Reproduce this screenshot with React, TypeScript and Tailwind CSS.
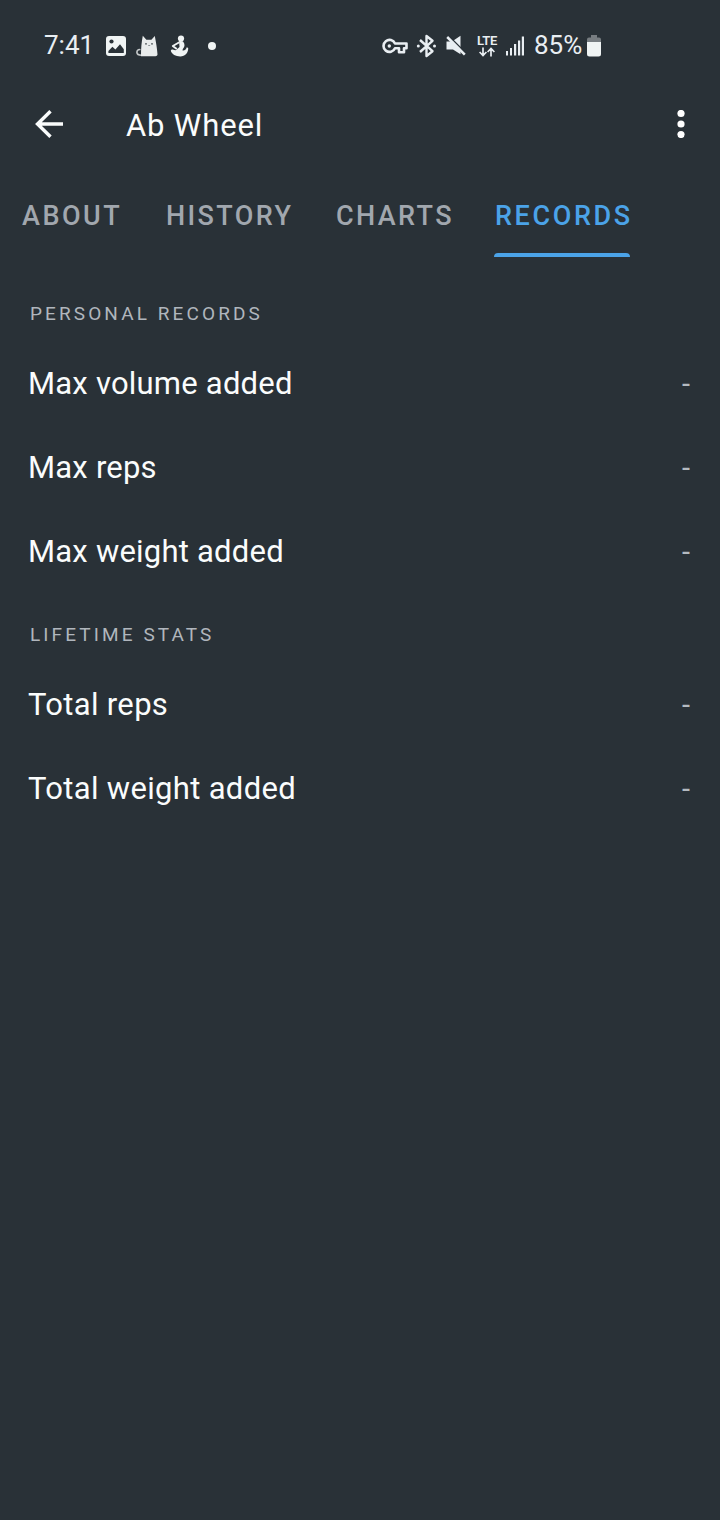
import React from "react";

const personal = ["Max volume added", "Max reps", "Max weight added"];
const lifetime = ["Total reps", "Total weight added"];

function StatusBar() {
  return (
    <div className="flex h-[90px] items-center pl-[44px] text-[#e9eef2]">
      <span className="w-[62px] shrink-0 text-[26px] leading-[30px] tracking-[0px]">7:41</span>
      <svg className="mt-[2px] shrink-0" width="20" height="20" viewBox="0 0 20 20">
        <rect width="20" height="20" rx="3" fill="#f0f4f4" />
        <circle cx="5.500" cy="5.500" r="2.100" fill="#293137" />
        <path d="M2.400 17V15l4-4.200 3 2.600L14 8.200l3.800 5V17z" fill="#293137" />
      </svg>
      <svg className="ml-[10px] mt-[1px] shrink-0" width="22" height="22" viewBox="0 0 22 22">
        <path d="M4.400 14.800C2.400 14 .8 15.400.9 17.400c.1 1.800 1.800 2.800 4.600 2.800" fill="none" stroke="#c6cacb" strokeWidth="1.600" />
        <path d="M5 21.200C4.900 14 5.600 7 6.800.8l3.600 4h5L18.800.9c1.200 6 2.400 13 2.700 18.600-.2 1.200-1 1.700-2 1.700z" fill="#e9ecec" />
        <circle cx="10" cy="8.800" r=".9" fill="#4b5256" />
        <circle cx="16" cy="8.800" r=".9" fill="#4b5256" />
        <path d="M12.200 10.500h2" stroke="#858b8e" strokeWidth=".9" />
      </svg>
      <svg className="ml-[12px] mt-[1px] shrink-0" width="20" height="22" viewBox="0 0 20 22" fill="#f0f4f4">
        <circle cx="11" cy="3.500" r="3.100" />
        <path d="M9 5.500L13 6.500c2 2.500 2 5 0 7.200l-.6 1.600c1.600.8 3.400-.4 4.400-3l1.400.8c.2 4.800-3 8.400-7.900 8.400-4.500 0-8.700-2.300-9.500-5.700.2-1 1.400-1.500 2.600-1.100 1.200.4 2.400 1 3.600-.5L9.500 12z" />
        <path d="M9.300 7.200L2.800 11l4 3" fill="none" stroke="#f0f4f4" strokeWidth="1.900" strokeLinejoin="round" />
      </svg>
      <span className="ml-[18px] mt-[1px] h-[8px] w-[8px] shrink-0 rounded-full bg-[#f0f4f4]" />

      <svg className="ml-[166px] mt-[2px] shrink-0" width="26" height="18" viewBox="0 0 26 18" fill="none" stroke="#e9eef2" strokeWidth="2.600">
        <path d="M13 6.500h11.500v4.800H22v3.900h-5v-3.900h-4A6 6 0 1 1 13 6.500z" strokeLinejoin="round" />
        <circle cx="7.300" cy="9" r="1.700" fill="#e9eef2" stroke="none" />
      </svg>
      <svg className="ml-[8px] mt-[1px] shrink-0" width="21" height="24" viewBox="0 0 21 24" fill="none" stroke="#e9eef2" strokeWidth="2.400">
        <path d="M4 6L16.500 17.200 10.500 22V2l6 4.800L4 18" strokeLinejoin="round" />
        <circle cx="2.300" cy="12" r="1.500" fill="#e9eef2" stroke="none" />
        <circle cx="18.500" cy="12" r="1.500" fill="#e9eef2" stroke="none" />
      </svg>
      <svg className="ml-[8px] mt-[1px] shrink-0" width="22" height="21" viewBox="0 0 22 21">
        <path d="M1.500 6.500h5.500L15.500.8v18.400L8 14.500H1.500z" fill="#e9eef2" />
        <path d="M4 1.200l17 17" stroke="#293137" strokeWidth="1.600" />
        <path d="M2.200 2l17.600 17.600" stroke="#e9eef2" strokeWidth="2.500" />
      </svg>
      <div className="ml-[9px] mt-[2px] flex w-[22px] shrink-0 flex-col items-center">
        <span className="text-[13px] font-semibold leading-[12px] tracking-[-0.200px]">LTE</span>
        <svg width="16" height="10" viewBox="0 0 16 10" fill="none" stroke="#e9eef2" strokeWidth="1.700">
          <path d="M4 .5v7.800M.6 5L4 8.500 7.400 5M12 9.500V1.600M8.600 5L12 1.500 15.400 5" />
        </svg>
      </div>
      <svg className="ml-[8px] mt-[2px] shrink-0" width="18" height="20" viewBox="0 0 18 20" fill="#e9eef2">
        <rect x="0" y="15" width="2" height="4.500" />
        <rect x="4" y="12" width="2" height="7.500" />
        <rect x="8" y="8" width="2.200" height="11.500" />
        <rect x="12" y="4.500" width="2.200" height="15" />
        <rect x="15.800" y="0.500" width="2.200" height="19" />
      </svg>
      <span className="ml-[10px] w-[53px] shrink-0 whitespace-nowrap text-[26px] leading-[30px] tracking-[0px]">85%</span>
      <svg className="mt-[1px] shrink-0" width="14" height="22" viewBox="0 0 14 22">
        <path d="M4 0h6v2.500h2a2 2 0 0 1 2 2V8H0V4.500a2 2 0 0 1 2-2h2z" fill="#777d81" />
        <path d="M0 7h14v12a2.500 2.500 0 0 1-2.500 2.500h-9A2.500 2.500 0 0 1 0 19z" fill="#f0f4f4" />
      </svg>
    </div>
  );
}

function Heading({ children }: { children: React.ReactNode }) {
  return (
    <h2 className="h-[24px] whitespace-nowrap pl-[30px] text-[19px] leading-[24px] tracking-[3.100px] text-[#b0b6bd]">
      {children}
    </h2>
  );
}

function Row({ label, tracking }: { label: string; tracking: string }) {
  return (
    <div className="flex h-[84px] items-center justify-between pl-[28px] pr-[29px]">
      <span className={`whitespace-nowrap text-[31px] leading-[36px] text-[#fafcfc] ${tracking}`}>{label}</span>
      <span className="flex w-[10px] justify-center text-[29px] leading-[36px] text-[#b4bac0]">-</span>
    </div>
  );
}

export default function App() {
  return (
    <div className="flex h-[1520px] w-[720px] flex-col overflow-hidden bg-[#293137] font-['Roboto',sans-serif]">
      <StatusBar />
      <header className="flex h-[68px] items-center pl-[35px] pr-[35px]">
        <svg width="29" height="28" viewBox="0 0 29 28" fill="none" stroke="#fafcfc" strokeWidth="3.400">
          <path d="M28 14H3M15.500 1.200L2.500 14l13 12.800" />
        </svg>
        <h1 className="ml-[62px] mt-[4px] whitespace-nowrap text-[31px] leading-[36px] tracking-[0.850px] text-[#fafcfc]">Ab Wheel</h1>
        <svg className="ml-auto" width="8" height="28" viewBox="0 0 8 28" fill="#ffffff">
          <circle cx="4" cy="3.500" r="3.600" />
          <circle cx="4" cy="14" r="3.600" />
          <circle cx="4" cy="24.500" r="3.600" />
        </svg>
      </header>
      <nav className="flex h-[99px] whitespace-nowrap pl-[22px] pt-[42px] text-[27px] font-medium leading-[32px] tracking-[2.500px] text-[#a1a7ae]">
        <span className="w-[144px]">ABOUT</span>
        <span className="w-[170px] tracking-[2.400px]">HISTORY</span>
        <span className="w-[158px] tracking-[2.400px]">CHARTS</span>
        <div className="flex w-[136px] flex-col justify-between text-[#4ba3e8]">
          <span className="pl-[1px] tracking-[2.600px]">RECORDS</span>
          <span className="h-[4px] rounded-t-[4px] bg-[#4ba3e8]" />
        </div>
      </nav>
      <main className="pt-[45px]">
        <Heading>PERSONAL RECORDS</Heading>
        <div className="pt-[16px]">
          {personal.map((t) => (
            <Row key={t} label={t} tracking="tracking-[0.220px]" />
          ))}
        </div>
        <div className="pt-[29px]">
          <Heading>LIFETIME STATS</Heading>
        </div>
        <div className="pt-[16px]">
          {lifetime.map((t) => (
            <Row key={t} label={t} tracking="tracking-[0.320px]" />
          ))}
        </div>
      </main>
    </div>
  );
}
